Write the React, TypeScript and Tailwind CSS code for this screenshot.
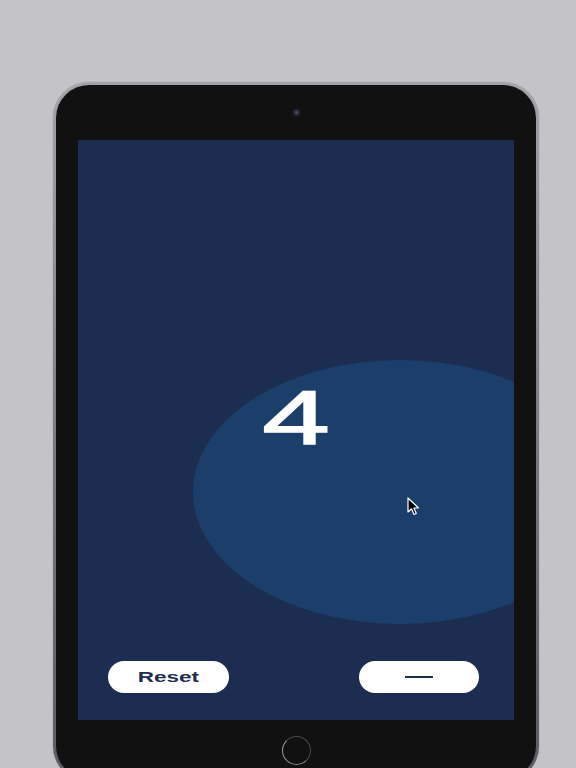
import React from "react";

function Cursor() {
  return (
    <svg width="16" height="20" viewBox="0 0 16 20" className="absolute left-[329px] top-[357px]">
      <path
        d="M1 1 L1 15 L4.5 11.8 L7 17.5 L9.3 16.5 L6.9 11 L11.5 11 Z"
        fill="#000"
        stroke="#fff"
        strokeWidth="1.2"
        strokeLinejoin="round"
      />
    </svg>
  );
}

export default function App() {
  return (
    <div className="h-screen w-full overflow-hidden bg-[#c4c3c8] pl-[53px] pt-[82px]">
      {/* device */}
      <div className="w-[486px] h-[700px] rounded-[36px] bg-gradient-to-b from-[#a4a4a8] via-[#7c7c80] to-[#5c5c60] p-[3px] shadow-[0_0_1px_rgba(0,0,0,0.4)]">
        <div className="flex h-full w-full flex-col items-center rounded-[33px] bg-[#111111] px-[22px]">
          {/* camera */}
          <div className="flex h-[55px] items-center justify-center">
            <div className="flex h-[7px] w-[7px] items-center justify-center rounded-full bg-[#2a2b38]">
              <div className="h-[3px] w-[3px] rounded-full bg-[#3c4a78]" />
            </div>
          </div>

          {/* screen */}
          <div className="relative flex h-[580px] w-[436px] flex-col overflow-hidden bg-[#1b2d50]">
            <div className="absolute left-[115px] top-[220px] h-[264px] w-[414px] rounded-[50%] bg-[#1c3e6a]" />

            <div
              className="relative mt-[240px] flex justify-center text-[76px] leading-none text-white"
              style={{ fontFamily: '"Liberation Sans", Arial, sans-serif' }}
            >
              <span className="inline-block origin-center scale-x-[1.6] [-webkit-text-stroke:1.4px_white]">4</span>
            </div>

            <Cursor />

            <div className="relative mt-auto flex items-center justify-between pb-[27px] pl-[30px] pr-[35px]">
              <button
                className="flex h-[32px] w-[121px] items-center justify-center rounded-full bg-white text-[15px] font-bold text-[#1e2d4f]"
                style={{ fontFamily: '"Liberation Sans", Arial, sans-serif' }}
              >
                <span className="inline-block scale-x-[1.5]">Reset</span>
              </button>
              <button className="flex h-[32px] w-[120px] items-center justify-center rounded-full bg-white">
                <span className="block h-[2px] w-[28px] bg-[#1e2d4f]" />
              </button>
            </div>
          </div>

          {/* home button */}
          <div className="mt-[16px] h-[29px] w-[29px] rounded-full border-[1.5px] border-t-[#4a4a4e] border-r-[#4a4a4e] border-b-[#8a8a8e] border-l-[#9a9a9e]" />
        </div>
      </div>
    </div>
  );
}
